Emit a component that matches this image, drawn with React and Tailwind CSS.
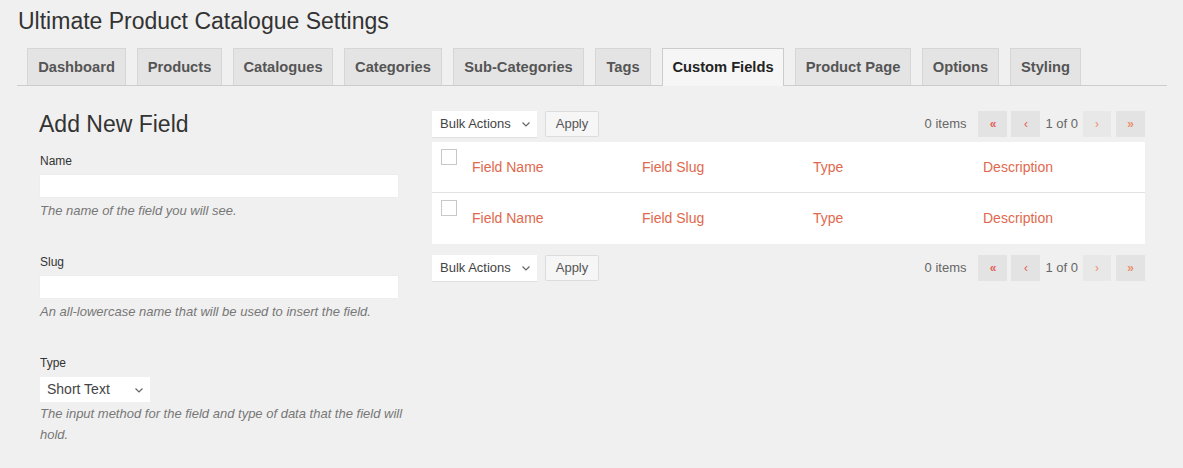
import React from "react";

const tabs = [
  { label: "Dashboard", w: "w-[99px]" },
  { label: "Products", w: "w-[85px]" },
  { label: "Catalogues", w: "w-[100px]" },
  { label: "Categories", w: "w-[98px]" },
  { label: "Sub-Categories", w: "w-[131px]" },
  { label: "Tags", w: "w-[56px]" },
  { label: "Custom Fields", w: "w-[122px]", active: true },
  { label: "Product Page", w: "w-[116px]" },
  { label: "Options", w: "w-[77px]" },
  { label: "Styling", w: "w-[71px]" },
];

const columns = [
  { label: "Field Name", w: "w-[170px]" },
  { label: "Field Slug", w: "w-[171px]" },
  { label: "Type", w: "w-[170px]" },
  { label: "Description", w: "" },
];

const Chevron = () => (
  <svg width="10" height="10" viewBox="0 0 10 10" className="text-[#666]">
    <path d="M1.5 3.5 L5 7 L8.5 3.5" fill="none" stroke="currentColor" strokeWidth="1.2" />
  </svg>
);

const TableNav = () => (
  <div className="flex h-[26px] items-center justify-between">
    <div className="flex items-center gap-[8px]">
      <div className="flex h-[26px] w-[105px] items-center justify-between bg-white pl-[8px] pr-[6px] text-[13px] text-[#444] shadow-[0_1px_1px_rgba(0,0,0,0.06)]">
        <span>Bulk Actions</span>
        <Chevron />
      </div>
      <button className="h-[26px] w-[54px] rounded-[2px] border border-[#ddd] bg-[#f6f6f6] text-[13px] text-[#555]">
        Apply
      </button>
    </div>
    <div className="flex items-center text-[13px] text-[#666]">
      <span className="mr-[12px]">0 items</span>
      <span className="flex h-[26px] w-[29px] items-center justify-center bg-[#e3e3e3] text-[12px] font-bold text-[#e4605a]">«</span>
      <span className="ml-[4px] flex h-[26px] w-[29px] items-center justify-center bg-[#e3e3e3] text-[12px] text-[#e4605a]">‹</span>
      <span className="mx-[5px] text-[#666]">1 of 0</span>
      <span className="flex h-[26px] w-[28px] items-center justify-center bg-[#e8e8e8] text-[12px] text-[#eb8f70]">›</span>
      <span className="ml-[5px] flex h-[26px] w-[29px] items-center justify-center bg-[#e3e3e3] text-[12px] font-bold text-[#eb8f70]">»</span>
    </div>
  </div>
);

const Row = ({ last }) => (
  <div className={`flex h-[51px] bg-white ${last ? "" : "border-b border-[#e1e1e1]"}`}>
    <div className="w-[40px] pl-[9px] pt-[7px]">
      <div className="h-[16px] w-[16px] border border-[#c8c8c8] bg-white" />
    </div>
    {columns.map((c) => (
      <div key={c.label} className={`${c.w} flex items-center text-[14px] text-[#e0694d]`}>
        {c.label}
      </div>
    ))}
  </div>
);

const Field = ({ label, hint, children, gap, hintGap = "mt-[3px]" }) => (
  <div className={gap}>
    <div className="text-[12px] leading-[16px] text-[#333]">{label}</div>
    <div className="mt-[6px]">{children}</div>
    <p className={`${hintGap} w-[372px] text-[13px] italic leading-[21px] text-[#777]`}>{hint}</p>
  </div>
);

export default function App() {
  return (
    <div className="min-h-[468px] bg-[#f0f0f0] font-['Liberation_Sans',Arial,sans-serif]">
      <div className="pl-[18px] pt-[7px]">
        <h1 className="text-[23px] leading-[29px] text-[#333]">Ultimate Product Catalogue Settings</h1>
      </div>

      <div className="ml-[17px] mr-[16px] mt-[12px] flex gap-[11px] border-b border-[#ccc] pl-[10px] pr-[10px]">
        {tabs.map((t) => (
          <div
            key={t.label}
            className={`${t.w} -mb-px flex items-center justify-center border border-b-0 text-[14.7px] font-bold ${
              t.active
                ? "h-[38px] border-[#ccc] bg-[#f6f6f6] text-[#222]"
                : "h-[37px] border-[#d6d6d6] bg-[#e4e4e4] text-[#555]"
            }`}
          >
            {t.label}
          </div>
        ))}
      </div>

      <div className="flex pl-[17px] pt-[24px]">
        <div className="w-[415px] pl-[22px]">
          <h2 className="text-[23px] leading-[29px] text-[#333]">Add New Field</h2>
          <div className="pl-[1px] pt-[14px]">
            <Field label="Name" hint="The name of the field you will see.">
              <div className="h-[22px] w-[358px] bg-white shadow-[0_0_1px_rgba(0,0,0,0.08)]" />
            </Field>
            <Field label="Slug" hint="An all-lowercase name that will be used to insert the field." gap="mt-[33px]">
              <div className="h-[22px] w-[358px] bg-white shadow-[0_0_1px_rgba(0,0,0,0.08)]" />
            </Field>
            <Field
              label="Type"
              hint="The input method for the field and type of data that the field will hold."
              gap="mt-[33px]"
              hintGap="mt-[1px]"
            >
              <div className="flex h-[25px] w-[110px] items-center justify-between bg-white pl-[7px] pr-[6px] text-[14px] text-[#444]">
                <span>Short Text</span>
                <Chevron />
              </div>
            </Field>
          </div>
        </div>

        <div className="w-[713px] pt-[1px]">
          <TableNav />
          <div className="mt-[5px]">
            <Row />
            <Row last />
          </div>
          <div className="mt-[11px]">
            <TableNav />
          </div>
        </div>
      </div>
    </div>
  );
}
